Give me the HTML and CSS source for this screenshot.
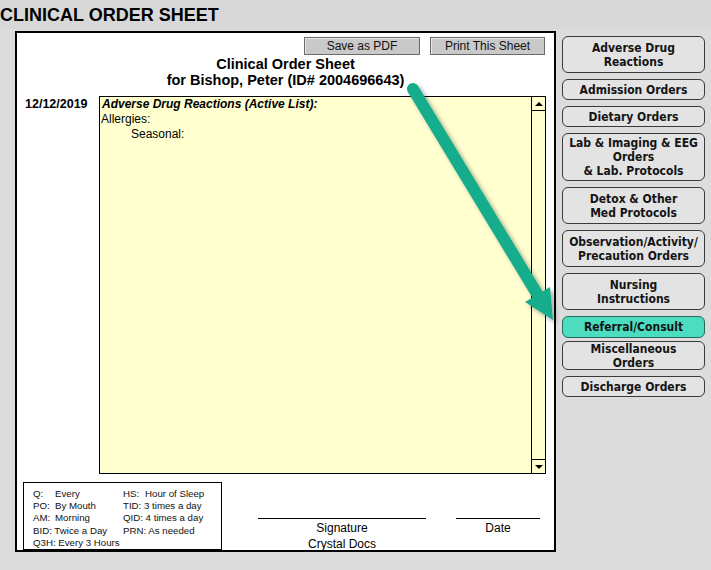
FILE: index.html
```html
<!DOCTYPE html>
<html lang="en">
<head>
  <meta charset="UTF-8" />
  <title>Clinical Order Sheet</title>
  <link rel="stylesheet" href="styles.css">
</head>
<body>

  <div class="titlebar">CLINICAL ORDER SHEET</div>

  <div class="page">
    <div class="sheet">
      <div class="sheet-tools">
        <button class="tool-btn save">Save as PDF</button>
        <button class="tool-btn print">Print This Sheet</button>
      </div>

      <div class="sheet-heading">
        Clinical Order Sheet<br>
        for Bishop, Peter (ID# 2004696643)
      </div>

      <div class="orders-row">
        <div class="order-date">12/12/2019</div>
        <div class="order-box">
          <div class="order-text">
            <div class="order-title">Adverse Drug Reactions (Active List):</div>
            <div>Allergies:</div>
            <div class="indent">Seasonal:</div>
          </div>
          <div class="scrollbar">
            <div class="scroll-btn"><span class="tri-up"></span></div>
            <div class="scroll-track"></div>
            <div class="scroll-btn down"><span class="tri-down"></span></div>
          </div>
        </div>
      </div>

      <div class="sheet-foot">
        <div class="legend">
          <div><span class="abbr">Q:</span>Every</div>
          <div><span class="abbr">HS:</span>Hour of Sleep</div>
          <div><span class="abbr">PO:</span>By Mouth</div>
          <div>TID: 3 times a day</div>
          <div><span class="abbr">AM:</span>Morning</div>
          <div>QID: 4 times a day</div>
          <div>BID: Twice a Day</div>
          <div>PRN: As needed</div>
          <div>Q3H: Every 3 Hours</div>
        </div>
        <div class="sign sign-name">Signature<br>Crystal Docs</div>
        <div class="sign sign-date">Date</div>
      </div>
    </div>

    <nav class="side-nav">
      <button class="nav-btn two">Adverse Drug<br>Reactions</button>
      <button class="nav-btn one">Admission Orders</button>
      <button class="nav-btn one">Dietary Orders</button>
      <button class="nav-btn three">Lab &amp; Imaging &amp; EEG<br>Orders<br>&amp; Lab. Protocols</button>
      <button class="nav-btn two">Detox &amp; Other<br>Med Protocols</button>
      <button class="nav-btn two">Observation/Activity/<br>Precaution Orders</button>
      <button class="nav-btn two">Nursing<br>Instructions</button>
      <button class="nav-btn one active">Referral/Consult</button>
      <button class="nav-btn tight">Miscellaneous<br>Orders</button>
      <button class="nav-btn one">Discharge Orders</button>
    </nav>
  </div>

  <!-- callout arrow pointing at the selected section -->
  <svg class="callout" width="711" height="570" viewBox="0 0 711 570">
    <defs>
      <filter id="shadow" x="-20%" y="-20%" width="140%" height="140%">
        <feDropShadow dx="3" dy="3" stdDeviation="2" flood-color="#000" flood-opacity="0.35"/>
      </filter>
    </defs>
    <g filter="url(#shadow)">
      <line x1="413" y1="89" x2="539" y2="297" stroke="#14ad8c" stroke-width="12" stroke-linecap="round"/>
      <polygon points="553,320 525,302 550,287" fill="#14ad8c"/>
    </g>
  </svg>

</body>
</html>
```

FILE: styles.css
```css
body {
  margin: 0;
  background-color: #dcdcdc;
  font-family: 'Liberation Sans', Arial, sans-serif;
  color: #000;
  width: 711px;
  height: 570px;
  overflow: hidden;
  position: relative;
}

.titlebar {
  height: 29px;
  padding-top: 1px;
  box-sizing: border-box;
  line-height: 28px;
  font-size: 18px;
  font-weight: bold;
  background-color: #d8d8d8;
}

.page {
  display: flex;
  align-items: flex-start;
  margin-top: 2px;
}

/* Main white sheet */
.sheet {
  margin-left: 15px;
  width: 541px;
  height: 521px;
  box-sizing: border-box;
  border: 2px solid #000;
  background: #fff;
  display: flex;
  flex-direction: column;
}

.sheet-tools {
  display: flex;
  justify-content: flex-end;
  gap: 10px;
  margin-top: 4px;
  padding-right: 9px;
}

.tool-btn {
  height: 18px;
  padding: 0;
  font-family: 'Liberation Sans', Arial, sans-serif;
  font-size: 12px;
  color: #111;
  background-color: #c9c9c9;
  border: 1px solid #6a6a6a;
  box-shadow: inset 1px 1px 0 #e8e8e8;
}

.tool-btn.save {
  width: 116px;
}

.tool-btn.print {
  width: 115px;
}

.sheet-heading {
  text-align: center;
  font-size: 14.5px;
  font-weight: bold;
  line-height: 16px;
  padding-top: 1px;
}

.orders-row {
  display: flex;
  margin-top: 8px;
}

.order-date {
  width: 82px;
  box-sizing: border-box;
  padding: 1px 0 0 8px;
  font-size: 12.5px;
  font-weight: bold;
  line-height: 14px;
}

.order-box {
  width: 447px;
  height: 378px;
  box-sizing: border-box;
  border: 1px solid #000;
  background-color: #ffffd0;
  display: flex;
}

.order-text {
  flex: 1;
  padding-left: 1px;
  font-size: 12px;
  line-height: 15px;
}

.order-title {
  font-weight: bold;
  font-style: italic;
  padding-left: 1px;
}

.indent {
  padding-left: 30px;
}

.scrollbar {
  width: 14px;
  box-sizing: border-box;
  border-left: 1px solid #000;
  display: flex;
  flex-direction: column;
}

.scroll-btn {
  height: 13px;
  border-bottom: 1px solid #000;
  display: flex;
  align-items: center;
  justify-content: center;
}

.scroll-btn.down {
  border-bottom: none;
  border-top: 1px solid #000;
}

.scroll-track {
  flex: 1;
}

.tri-up {
  width: 0;
  height: 0;
  border-left: 4px solid transparent;
  border-right: 4px solid transparent;
  border-bottom: 4px solid #000;
}

.tri-down {
  width: 0;
  height: 0;
  border-left: 4px solid transparent;
  border-right: 4px solid transparent;
  border-top: 4px solid #000;
}

/* Legend and signatures */
.sheet-foot {
  display: flex;
  align-items: flex-start;
  margin-top: 8px;
}

.legend {
  margin-left: 6px;
  width: 199px;
  height: 68px;
  box-sizing: border-box;
  border: 1px solid #000;
  padding: 5px 0 0 9px;
  display: grid;
  grid-template-columns: 90px 1fr;
  font-size: 9.7px;
  line-height: 12px;
  color: #111;
}

.abbr {
  display: inline-block;
  width: 22px;
}

.sign {
  margin-top: 36px;
  padding-top: 1px;
  border-top: 1px solid #000;
  text-align: center;
  font-size: 12px;
  line-height: 16px;
}

.sign-name {
  margin-left: 36px;
  width: 168px;
}

.sign-date {
  margin-left: 30px;
  width: 84px;
}

/* Right-hand section buttons */
.side-nav {
  margin-left: 6px;
  margin-top: 5px;
  width: 143px;
  display: flex;
  flex-direction: column;
  gap: 6px;
}

.nav-btn {
  padding: 0 1px;
  box-sizing: border-box;
  border: 1px solid #3a3a3a;
  border-radius: 6px;
  background-color: #e3e3e3;
  font-family: 'DejaVu Sans Condensed', 'DejaVu Sans', sans-serif;
  font-size: 12px;
  font-weight: bold;
  line-height: 14px;
  color: #141414;
  text-align: center;
}

.nav-btn.one {
  height: 21px;
}

.nav-btn.two {
  height: 37px;
}

.nav-btn.three {
  height: 48px;
}

.nav-btn.tight {
  height: 29px;
  margin-top: -3px;
}

.nav-btn.active {
  height: 22px;
  background-color: #4cdcbf;
  border-color: #2a6a5c;
}

.callout {
  position: absolute;
  left: 0;
  top: 0;
  pointer-events: none;
}
```
